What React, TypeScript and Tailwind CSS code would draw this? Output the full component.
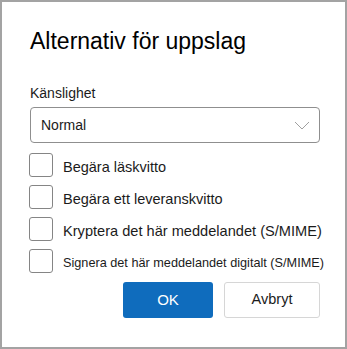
import { useState } from "react";

const options = [
  { label: "Begära läskvitto", size: "text-[14.5px]" },
  { label: "Begära ett leveranskvitto", size: "text-[14.5px]" },
  { label: "Kryptera det här meddelandet (S/MIME)", size: "text-[14.6px]" },
  { label: "Signera det här meddelandet digitalt (S/MIME)", size: "text-[12.7px]" },
];

export default function App() {
  const [checked, setChecked] = useState<boolean[]>(options.map(() => false));

  return (
    <div className="h-[349px] w-[347px] border-2 border-[#a3a3a3] bg-white pl-[28px] pr-[25px] pt-[25px] font-['Liberation_Sans',Arial,sans-serif] text-[#1b1b1b]">
      <h1 className="text-[23px] leading-[28px] text-black">Alternativ för uppslag</h1>

      <div className="mt-[28px] text-[14px] leading-[20px]">Känslighet</div>

      <div className="mt-[4px] flex h-[36px] w-[290px] items-center justify-between rounded-[4px] border border-[#8f8f8f] pl-[10px] pr-[9px]">
        <span className="text-[14px] text-[#1b1b1b]">Normal</span>
        <svg width="16" height="9" viewBox="0 0 16 9" fill="none">
          <path d="M1 1l7 7 7-7" stroke="#a0a0a0" strokeWidth="1" />
        </svg>
      </div>

      <div className="mt-[10px] flex flex-col gap-[8px]">
        {options.map((opt, i) => (
          <label key={opt.label} className="-ml-[1px] flex h-[24px] items-start gap-[10px]">
            <button
              type="button"
              onClick={() =>
                setChecked((c) => c.map((v, j) => (j === i ? !v : v)))
              }
              className="h-[24px] w-[24px] shrink-0 rounded-[3px] border border-[#858585] bg-white"
            />
            <span className={`${opt.size} whitespace-nowrap pt-[4px] leading-[20px]`}>
              {opt.label}
            </span>
          </label>
        ))}
      </div>

      <div className="mt-[9px] flex w-[290px] justify-end gap-[11px]">
        <button className="h-[36px] w-[90px] rounded-[3px] bg-[#0f6cbd] text-[15px] text-white">
          OK
        </button>
        <button className="h-[36px] w-[96px] rounded-[3px] border border-[#d6d6d6] bg-white text-[14.5px] text-[#1b1b1b]">
          Avbryt
        </button>
      </div>
    </div>
  );
}
